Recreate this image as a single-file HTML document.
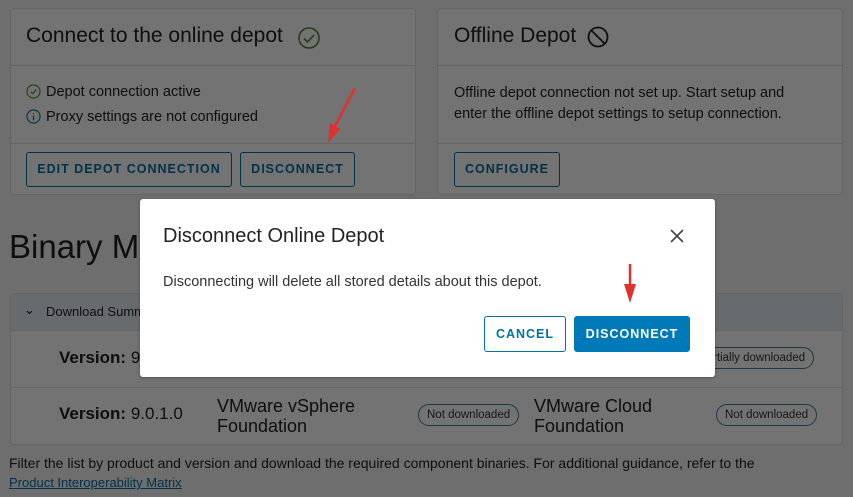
<!DOCTYPE html>
<html><head><style>
*{margin:0;padding:0;box-sizing:border-box}
body{width:853px;height:497px;overflow:hidden;font-family:"Liberation Sans",sans-serif;color:#222;position:relative;background:#f4f4f4}
.a{position:absolute;white-space:nowrap}
.card{position:absolute;border:1px solid #ddd;border-radius:4px;background:#fff}
.btn{position:absolute;border:1px solid #0072a3;border-radius:3px;color:#0072a3;font-weight:bold;font-size:12.5px;letter-spacing:1px;text-align:center;line-height:32px}
.hl{position:absolute;height:1px;background:#ddd}
.pill{position:absolute;border:1px solid #3a7fa0;border-radius:12px;font-size:11.5px;line-height:20px;padding:0 8px;color:#333}
</style></head><body>
<div class="card" style="left:10px;top:8px;width:406px;height:187px"></div>
<div class="a" style="left:26px;top:24px;font-size:21px">Connect to the online depot</div>
<svg class="a" style="left:297px;top:26px" width="24" height="24" viewBox="0 0 24 24"><circle cx="12" cy="12" r="10" fill="none" stroke="#4a8a2a" stroke-width="1.6"/><path d="M7 12.5l3.5 3.5 6.5-7" fill="none" stroke="#4a8a2a" stroke-width="1.6"/></svg>
<div class="hl" style="left:11px;top:65px;width:404px"></div>
<svg class="a" style="left:26px;top:84px" width="15" height="15" viewBox="0 0 16 16"><circle cx="8" cy="8" r="7" fill="none" stroke="#4a8a2a" stroke-width="1.2"/><path d="M5 8.3l2 2 4-4.3" fill="none" stroke="#4a8a2a" stroke-width="1.2"/></svg>
<div class="a" style="left:46px;top:84px;font-size:14.5px">Depot connection active</div>
<svg class="a" style="left:26px;top:109px" width="15" height="15" viewBox="0 0 16 16"><circle cx="8" cy="8" r="7" fill="none" stroke="#0072a3" stroke-width="1.2"/><path d="M8 7v5M8 4.5v1" stroke="#0072a3" stroke-width="1.3"/></svg>
<div class="a" style="left:46px;top:109px;font-size:14.5px">Proxy settings are not configured</div>
<div class="hl" style="left:11px;top:143px;width:404px"></div>
<div class="btn" style="left:26px;top:152px;width:206px;height:35px">EDIT DEPOT CONNECTION</div>
<div class="btn" style="left:240px;top:152px;width:115px;height:35px">DISCONNECT</div>

<div class="card" style="left:437px;top:8px;width:406px;height:187px"></div>
<div class="a" style="left:454px;top:24px;font-size:21px">Offline Depot</div>
<svg class="a" style="left:586px;top:25px" width="24" height="24" viewBox="0 0 24 24"><circle cx="12" cy="12" r="9.5" fill="none" stroke="#222" stroke-width="1.8"/><path d="M5.5 5.5l13 13" stroke="#222" stroke-width="1.8"/></svg>
<div class="hl" style="left:438px;top:65px;width:404px"></div>
<div class="a" style="left:454px;top:83px;font-size:14.5px;line-height:21px">Offline depot connection not set up. Start setup and<br>enter the offline depot settings to setup connection.</div>
<div class="hl" style="left:438px;top:143px;width:404px"></div>
<div class="btn" style="left:454px;top:152px;width:106px;height:35px">CONFIGURE</div>

<div class="a" style="left:9px;top:228px;font-size:33px">Binary Management</div>
<div class="card" style="left:10px;top:293px;width:833px;height:152px"></div>
<div class="a" style="left:11px;top:294px;width:831px;height:37px;background:#e6eef3;border-bottom:1px solid #ddd"></div>
<div class="a" style="left:24px;top:302px;font-size:13px">⌄</div>
<div class="a" style="left:46px;top:304px;font-size:13px">Download Summary</div>
<div class="a" style="left:59px;top:348px;font-size:17px"><b>Version:</b> 9.0.0.0</div>
<div class="pill" style="left:690px;top:347px">Partially downloaded</div>
<div class="hl" style="left:11px;top:387px;width:831px"></div>
<div class="a" style="left:59px;top:404px;font-size:17px"><b>Version:</b> 9.0.1.0</div>
<div class="a" style="left:217px;top:396px;font-size:18px;line-height:20px">VMware vSphere<br>Foundation</div>
<div class="pill" style="left:418px;top:404px">Not downloaded</div>
<div class="a" style="left:534px;top:396px;font-size:18px;line-height:20px">VMware Cloud<br>Foundation</div>
<div class="pill" style="left:716px;top:404px">Not downloaded</div>
<div class="a" style="left:9px;top:455px;font-size:14px">Filter the list by product and version and download the required component binaries. For additional guidance, refer to the</div>
<div class="a" style="left:9px;top:475px;font-size:13px;color:#0072a3;text-decoration:underline">Product Interoperability Matrix</div>

<div class="a" style="left:0;top:0;width:853px;height:497px;background:rgba(0,0,0,0.55)"></div>
<svg class="a" style="left:320px;top:85px" width="40" height="60"><path d="M35 3L13 45" stroke="#e03030" stroke-width="2.5"/><path d="M8 58L10 38 20 44z" fill="#e03030"/></svg>

<div class="a" style="left:140px;top:199px;width:575px;height:178px;background:#fff;border-radius:3px;box-shadow:0 1px 3px rgba(0,0,0,.3)"></div>
<div class="a" style="left:163px;top:225px;font-size:20px;color:#222">Disconnect Online Depot</div>
<svg class="a" style="left:670px;top:229px" width="14" height="14"><path d="M1 1L13 13M13 1L1 13" stroke="#444" stroke-width="1.6"/></svg>
<div class="a" style="left:163px;top:274px;font-size:14.5px;color:#333">Disconnecting will delete all stored details about this depot.</div>
<div class="btn" style="left:484px;top:316px;width:82px;height:36px;line-height:34px">CANCEL</div>
<div class="btn" style="left:574px;top:316px;width:116px;height:36px;border-color:#0079b8;background:#0079b8;color:#fff;line-height:34px">DISCONNECT</div>
<svg class="a" style="left:620px;top:262px" width="20" height="44"><path d="M10 2V28" stroke="#e03030" stroke-width="2.5"/><path d="M10 41L4 22 16 22z" fill="#e03030"/></svg>
</body></html>
